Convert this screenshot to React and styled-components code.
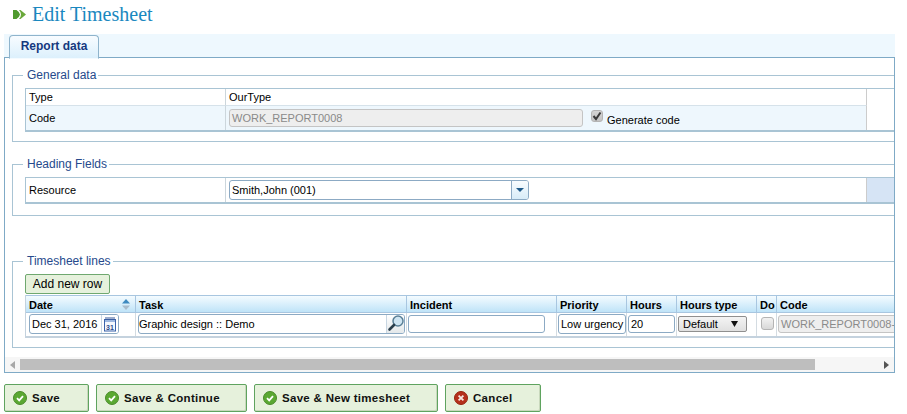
import styled, { createGlobalStyle } from 'styled-components'

const Global = createGlobalStyle`
    html, body {
        margin: 0;
        padding: 0;
        background: #fff;
        overflow: hidden;
    }
    * { box-sizing: border-box; }
`

const Page = styled.div`
    width: 907px;
    height: 414px;
    font-family: "Liberation Sans", Arial, sans-serif;
    font-size: 11px;
    color: #000;
`

const Header = styled.div`
    display: flex;
    align-items: center;
    gap: 6px;
    height: 28px;
    padding-left: 13px;
`

const Titulo = styled.h1`
    margin: 0;
    font-family: "Liberation Serif", "Times New Roman", serif;
    font-weight: 400;
    font-size: 20px;
    color: #1a88bf;
`

const TabBar = styled.div`
    display: flex;
    height: 24px;
    margin: 6px 12px 0 4px;
    padding: 1px 0 0 5px;
    background: #eef8fe;
`

const Tab = styled.div`
    width: 90px;
    height: 24px;
    border: 1px solid #8fb4cc;
    border-bottom: 1px solid #f4fbff;
    border-radius: 4px 4px 0 0;
    background: linear-gradient(#f8fcff, #dcf0fc);
    color: #15397f;
    font-weight: 700;
    font-size: 12px;
    text-align: center;
    line-height: 21px;
    position: relative;
    z-index: 1;
`

const Panel = styled.div`
    height: 316px;
    margin: -1px 12px 0 4px;
    border: 1px solid #7faac6;
    overflow: hidden;
    display: flex;
    flex-direction: column;
`

const Content = styled.div`
    flex: 1;
    padding-left: 7px;
    overflow: hidden;
`

const Group = styled.section`
    position: relative;
    width: 900px;
    height: ${p => p.$height}px;
    margin-top: ${p => p.$top}px;
    border: 1px solid #a9c4d4;
    padding: 12px 0 0 12px;
`

const Legend = styled.div`
    position: absolute;
    top: -8px;
    left: 10px;
    padding: 0 2px 0 4px;
    background: #fff;
    color: #264a8c;
    font-size: 12px;
    line-height: 14px;
`

const FormTable = styled.div`
    border: 1px solid #a9c4d4;
    border-right: 0;
    border-bottom: 2px solid #a9c4d4;
    display: flex;
    flex-direction: column;
`

const FormRow = styled.div`
    display: grid;
    grid-template-columns: 200px 641px 1fr;
    height: ${p => p.$height}px;
    align-items: stretch;
`

const FormLabel = styled.div`
    display: flex;
    align-items: center;
    padding-left: 3px;
    border-right: 1px solid #ccd6dc;
    border-top: ${p => (p.$alt ? '1px solid #d6e2ea' : '0')};
    background: ${p => (p.$alt ? '#eef7fd' : '#fff')};
`

const FormValue = styled.div`
    display: flex;
    align-items: center;
    gap: 8px;
    padding-left: 3px;
    border-right: 1px solid #ccc;
    border-top: ${p => (p.$alt ? '1px solid #d6e2ea' : '0')};
    background: ${p => (p.$alt ? '#eef7fd' : '#fff')};
`

const SideCell = styled.div`
    background: ${p => (p.$fill ? '#d6e4f5' : '#fff')};
`

const Box = styled.div`
    display: flex;
    align-items: center;
    width: ${p => p.$width}px;
    height: ${p => p.$height || 20}px;
    padding-left: ${p => p.$pad ?? 2}px;
    border: 1px solid ${p => (p.$disabled ? '#c4c4c4' : '#8caac4')};
    border-radius: 3px;
    background: ${p => (p.$disabled ? '#eeeeee' : '#fff')};
    color: ${p => (p.$disabled ? '#8a8a8a' : '#000')};
    white-space: nowrap;
    overflow: hidden;
    flex: none;
`

const Check = styled.span`
    display: flex;
    align-items: center;
    justify-content: center;
    width: 13px;
    height: 13px;
    border: 1px solid #b4b4b4;
    border-radius: 3px;
    background: linear-gradient(#f2f2f2, #d8d8d8);
    flex: none;
`

const CheckedBox = styled(Check)`
    width: 12px;
    height: 12px;
    background: linear-gradient(#d4d4d4, #c4c4c4);
`

const CheckLabel = styled.label`
    display: flex;
    align-items: center;
    gap: 4px;
    & > span:first-child { margin-bottom: 4px; }
    & > span:last-child { padding-top: 4px; }
`

const ComboArrow = styled.span`
    display: flex;
    align-items: center;
    justify-content: center;
    width: 17px;
    height: 100%;
    margin-left: auto;
    border-left: 1px solid #8caac4;
    background: linear-gradient(#f8fcff, #d8ecf8);
`

const AddButton = styled.button`
    display: block;
    width: 85px;
    height: 20px;
    padding: 0;
    border: 1px solid #6fa86f;
    border-radius: 2px;
    background: #e6f1dc;
    font: 12px "Liberation Sans", Arial, sans-serif;
    color: #000;
`

const Lines = styled.table`
    table-layout: fixed;
    width: 880px;
    margin-top: 1px;
    border-collapse: separate;
    border-spacing: 0;
    border-left: 1px solid #c4d2de;
    border-bottom: 2px solid #c4d2de;
`

const Th = styled.th`
    height: 18px;
    padding: 1px 0 0 3px;
    text-align: left;
    font-size: 11px;
    border-top: 1px solid #a8c6e0;
    border-right: 1px solid #a8c6e0;
    border-bottom: 1px solid #a8c6e0;
    background: linear-gradient(#f4fbff, #bfe3f8);
    white-space: nowrap;
`

const Td = styled.td`
    height: 23px;
    padding: 0 0 2px ${p => p.$pad ?? 2}px;
    border-right: 1px solid #d4dce2;
    overflow: hidden;
`

const HeadInner = styled.div`
    display: flex;
    align-items: center;
    justify-content: space-between;
    padding-right: 5px;
`

const Trigger = styled.span`
    display: flex;
    align-items: center;
    justify-content: center;
    width: ${p => p.$width}px;
    height: 100%;
    margin-left: auto;
    border-left: 1px solid #c8d6e2;
    background: ${p => (p.$shade ? 'linear-gradient(#ffffff, #e4e8ea)' : '#fff')};
    flex: none;
`

const SelectBox = styled.div`
    display: flex;
    align-items: center;
    justify-content: space-between;
    width: 69px;
    height: 16px;
    padding: 0 8px 0 4px;
    border: 1px solid #8f8f8f;
    border-radius: 2px;
    background: linear-gradient(#f4f4f4, #e0e0e0);
`

const Scrollbar = styled.div`
    display: flex;
    align-items: center;
    height: 15px;
    background: #f6f6f6;
    flex: none;
`

const ScrollArrow = styled.span`
    display: flex;
    align-items: center;
    justify-content: center;
    width: 15px;
    height: 100%;
    flex: none;
`

const ScrollTrack = styled.div`
    flex: 1;
    height: 11px;
`

const Thumb = styled.div`
    width: 795px;
    height: 100%;
    background: #bebebe;
`

const Actions = styled.div`
    display: flex;
    gap: 7px;
    margin: 11px 0 0 4px;
`

const ActionButton = styled.button`
    display: flex;
    align-items: center;
    gap: 5px;
    width: ${p => p.$width}px;
    height: 28px;
    padding: 0 0 0 8px;
    border: 1px solid #5fa35f;
    border-radius: 2px;
    background: #e6f1dc;
    box-shadow: inset -1px -1px 0 #c8d8bc;
    font: 700 11.5px "Liberation Sans", Arial, sans-serif;
    letter-spacing: 0.3px;
    color: #111;
`

function OkIcon() {
    return (
        <svg width="14" height="14" viewBox="0 0 14 14">
            <circle cx="7" cy="7" r="6.5" fill="#5aa832" stroke="#4a8a2a" />
            <path d="M4 7.2l2.2 2.2L10 5.2" fill="none" stroke="#fff" strokeWidth="1.8" />
        </svg>
    )
}

function CancelIcon() {
    return (
        <svg width="14" height="14" viewBox="0 0 14 14">
            <circle cx="7" cy="7" r="6.5" fill="#b5301c" stroke="#96240f" />
            <path d="M4.6 4.6l4.8 4.8M9.4 4.6l-4.8 4.8" fill="none" stroke="#f6e6e0" strokeWidth="1.8" />
        </svg>
    )
}

function TitleIcon() {
    return (
        <svg width="13" height="9" viewBox="0 0 13 9">
            <path d="M0 0h3.500Q6.500 2 7 4.500 6.500 7 3.500 9H0z" fill="#4f9a2e" />
            <path d="M6 0h1.500L13 4.500 7.500 9H6q2-2 2-4.500T6 0z" fill="#6aa83a" />
        </svg>
    )
}

function CalendarIcon() {
    return (
        <svg width="14" height="16" viewBox="0 0 14 16">
            <rect x="1.500" y="3.500" width="11" height="11.500" fill="#f4f8fe" stroke="#3a62aa" />
            <rect x="2" y="4" width="10" height="2" fill="#9db8e0" />
            <path d="M3 1v3M5 1v3M7 1v3M9 1v3M11 1v3" stroke="#3a5a9a" />
            <text x="7" y="13.500" fontSize="7" fontWeight="700" textAnchor="middle" fill="#2a4a8a" fontFamily="Liberation Sans">31</text>
        </svg>
    )
}

function SearchIcon() {
    return (
        <svg width="17" height="17" viewBox="0 0 17 17">
            <circle cx="11" cy="6" r="5" fill="#cfe5f2" stroke="#5a7f96" strokeWidth="1.500" />
            <path d="M7 10L2.500 14.500" stroke="#2c3f4c" strokeWidth="2.600" strokeLinecap="round" />
        </svg>
    )
}

function SortIcon() {
    return (
        <svg width="8" height="11" viewBox="0 0 8 11">
            <path d="M4 0L8 4.500H0z" fill="#3f8ac0" />
            <path d="M4 11L8 6.500H0z" fill="#a9bccb" />
        </svg>
    )
}

function Tick() {
    return (
        <svg width="10" height="10" viewBox="0 0 10 10">
            <path d="M1.500 5l2.500 3L8.500 1.500" fill="none" stroke="#3a3a3a" strokeWidth="2" />
        </svg>
    )
}

const colunas = [
    { titulo: 'Date', largura: 110 },
    { titulo: 'Task', largura: 271 },
    { titulo: 'Incident', largura: 150 },
    { titulo: 'Priority', largura: 70 },
    { titulo: 'Hours', largura: 50 },
    { titulo: 'Hours type', largura: 80 },
    { titulo: 'Do', largura: 20 },
    { titulo: 'Code', largura: 129 },
]

const botoes = [
    { texto: 'Save', largura: 85 },
    { texto: 'Save & Continue', largura: 151 },
    { texto: 'Save & New timesheet', largura: 184 },
]

export default function App() {
    return (
        <Page>
            <Global />
            <Header>
                <TitleIcon />
                <Titulo>Edit Timesheet</Titulo>
            </Header>
            <TabBar>
                <Tab>Report data</Tab>
            </TabBar>
            <Panel>
                <Content>
                    <Group $top={17} $height={67}>
                        <Legend>General data</Legend>
                        <FormTable>
                            <FormRow $height={16}>
                                <FormLabel>Type</FormLabel>
                                <FormValue>OurType</FormValue>
                                <SideCell />
                            </FormRow>
                            <FormRow $height={25}>
                                <FormLabel $alt>Code</FormLabel>
                                <FormValue $alt>
                                    <Box $width={354} $height={18} $disabled>WORK_REPORT0008</Box>
                                    <CheckLabel>
                                        <CheckedBox><Tick /></CheckedBox>
                                        <span>Generate code</span>
                                    </CheckLabel>
                                </FormValue>
                                <SideCell />
                            </FormRow>
                        </FormTable>
                    </Group>
                    <Group $top={22} $height={52}>
                        <Legend>Heading Fields</Legend>
                        <FormTable>
                            <FormRow $height={24}>
                                <FormLabel>Resource</FormLabel>
                                <FormValue>
                                    <Box $width={300}>
                                        Smith,John (001)
                                        <ComboArrow>
                                            <svg width="8" height="4" viewBox="0 0 8 4"><path d="M0 0h8L4 4z" fill="#1f5a8a" /></svg>
                                        </ComboArrow>
                                    </Box>
                                </FormValue>
                                <SideCell $fill />
                            </FormRow>
                        </FormTable>
                    </Group>
                    <Group $top={45} $height={87}>
                        <Legend>Timesheet lines</Legend>
                        <AddButton>Add new row</AddButton>
                        <Lines>
                            <colgroup>
                                {colunas.map(c => <col key={c.titulo} width={c.largura} />)}
                            </colgroup>
                            <thead>
                                <tr>
                                    {colunas.map(c => (
                                        <Th key={c.titulo}>
                                            {c.titulo === 'Date'
                                                ? <HeadInner>Date<SortIcon /></HeadInner>
                                                : c.titulo}
                                        </Th>
                                    ))}
                                </tr>
                            </thead>
                            <tbody>
                                <tr>
                                    <Td $pad={3}>
                                        <Box $width={90}>
                                            Dec 31, 2016
                                            <Trigger $width={17}><CalendarIcon /></Trigger>
                                        </Box>
                                    </Td>
                                    <Td>
                                        <Box $width={267} $pad={0}>
                                            Graphic design :: Demo
                                            <Trigger $width={18} $shade><SearchIcon /></Trigger>
                                        </Box>
                                    </Td>
                                    <Td $pad={1}><Box $width={137} $height={18} /></Td>
                                    <Td $pad={1}><Box $width={68}>Low urgency</Box></Td>
                                    <Td $pad={1}><Box $width={47} $height={18}>20</Box></Td>
                                    <Td $pad={1}>
                                        <SelectBox>
                                            Default
                                            <svg width="7" height="6" viewBox="0 0 7 6"><path d="M0 0h7L3.500 6z" fill="#111" /></svg>
                                        </SelectBox>
                                    </Td>
                                    <Td $pad={4}><Check /></Td>
                                    <Td $pad={1}><Box $width={130} $height={18} $disabled>WORK_REPORT0008-</Box></Td>
                                </tr>
                            </tbody>
                        </Lines>
                    </Group>
                </Content>
                <Scrollbar>
                    <ScrollArrow>
                        <svg width="5" height="8" viewBox="0 0 5 8"><path d="M5 0v8L0 4z" fill="#a8a8a8" /></svg>
                    </ScrollArrow>
                    <ScrollTrack><Thumb /></ScrollTrack>
                    <ScrollArrow>
                        <svg width="5" height="8" viewBox="0 0 5 8"><path d="M0 0v8l5-4z" fill="#555" /></svg>
                    </ScrollArrow>
                </Scrollbar>
            </Panel>
            <Actions>
                {botoes.map(b => (
                    <ActionButton key={b.texto} $width={b.largura}>
                        <OkIcon />
                        {b.texto}
                    </ActionButton>
                ))}
                <ActionButton $width={96}>
                    <CancelIcon />
                    Cancel
                </ActionButton>
            </Actions>
        </Page>
    )
}
